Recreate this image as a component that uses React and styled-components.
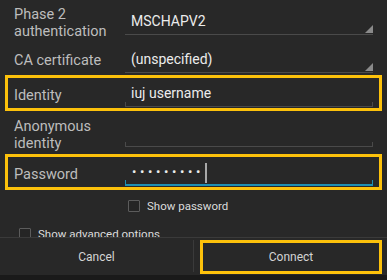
import React from 'react'
import styled, { createGlobalStyle } from 'styled-components'

const GlobalStyle = createGlobalStyle`
  html, body {
    margin: 0;
    padding: 0;
    background: #282828;
    font-family: Roboto, "Liberation Sans", sans-serif;
  }
`

const Screen = styled.div`
  width: 387px;
  height: 280px;
  display: flex;
  flex-direction: column;
  background: #282828;
  overflow: hidden;
`

const Scroll = styled.div`
  height: 237px;
  overflow: hidden;
  padding-top: 2px;
  box-sizing: border-box;
`

const Row = styled.div`
  display: grid;
  grid-template-columns: 111px 1fr;
  align-items: center;
  height: ${p => p.$h}px;
  padding: ${p => p.$pt || 0}px 6px 0 6px;
  margin: 0 8px;
  box-sizing: border-box;
  outline: ${p => (p.$marked ? '3px solid #fcc10b' : 'none')};
`

const Label = styled.div`
  color: #bdbdbd;
  font-size: 14.5px;
  line-height: 17px;
`

const Field = styled.div`
  position: relative;
  height: 24px;
  box-sizing: border-box;
  display: flex;
  align-items: flex-end;
  padding: 0 0 4px 6px;
  color: #ececec;
  font-size: 14px;
  line-height: 17px;
  border-bottom: ${p => (p.$focused ? '2px solid #1e8fb3' : '1px solid #4a4a4a')};
`

const Spinner = styled(Field)`
  &::after {
    content: '';
    position: absolute;
    right: 0;
    bottom: 1px;
    width: 0;
    height: 0;
    border-left: 8px solid transparent;
    border-bottom: 8px solid #8a8a8a;
  }
`

const EditText = styled(Field)`
  &::before,
  &::after {
    content: '';
    position: absolute;
    bottom: 0;
    width: 1px;
    height: 4px;
    background: ${p => (p.$focused ? '#1e8fb3' : '#4a4a4a')};
  }
  &::before { left: 0; }
  &::after { right: 0; }
`

const Dots = styled.span`
  letter-spacing: 3.6px;
  font-size: 13px;
  padding-left: 1px;
`

const Cursor = styled.span`
  display: inline-block;
  width: 2px;
  height: 20px;
  margin: 0 0 -3px 1px;
  background: #a8a8a8;
`

const CheckRow = styled.div`
  display: flex;
  align-items: center;
  gap: 7px;
  height: ${p => p.$h}px;
  padding-left: ${p => p.$indent}px;
  color: #dcdcdc;
  font-size: 11.5px;
`

const Box = styled.span`
  width: 10px;
  height: 10px;
  border: 1px solid #5c5c5c;
  border-radius: 1px;
  background: #252525;
  flex-shrink: 0;
`

const ButtonBar = styled.div`
  display: flex;
  height: 38px;
  border-top: 1px solid #3a3a3a;
  box-sizing: border-box;
`

const BarButton = styled.div`
  flex: ${p => (p.$marked ? '0 0 182px' : '1')};
  display: flex;
  align-items: center;
  justify-content: center;
  box-sizing: border-box;
  margin: ${p => (p.$marked ? '2px 5px 1px 6px' : '0')};
  border: ${p => (p.$marked ? '3px solid #fcc10b' : 'none')};
  color: #d4d4d4;
  font-size: 12px;
`

const Divider = styled.div`
  width: 1px;
  margin: 2px 0 3px;
  background: #3a3a3a;
`

const NavStrip = styled.div`
  flex: 1;
  background: #1a1a1a;
`

export default function App() {
  return (
    <>
      <GlobalStyle />
      <Screen>
        <Scroll>
          <Row $h={41}>
            <Label>Phase 2<br />authentication</Label>
            <Spinner>MSCHAPV2</Spinner>
          </Row>
          <Row $h={35}>
            <Label>CA certificate</Label>
            <Spinner>(unspecified)</Spinner>
          </Row>
          <Row $h={30} $pt={4} $marked>
            <Label>Identity</Label>
            <EditText>iuj username</EditText>
          </Row>
          <Row $h={49} $pt={5}>
            <Label>Anonymous<br />identity</Label>
            <EditText />
          </Row>
          <Row $h={30} $pt={4} $marked>
            <Label>Password</Label>
            <EditText $focused>
              <Dots>•••••••••</Dots>
              <Cursor />
            </EditText>
          </Row>
          <CheckRow $h={38} $indent={128}>
            <Box />
            Show password
          </CheckRow>
          <CheckRow $h={18} $indent={19}>
            <Box />
            Show advanced options
          </CheckRow>
        </Scroll>
        <ButtonBar>
          <BarButton>Cancel</BarButton>
          <Divider />
          <BarButton $marked>Connect</BarButton>
        </ButtonBar>
        <NavStrip />
      </Screen>
    </>
  )
}
